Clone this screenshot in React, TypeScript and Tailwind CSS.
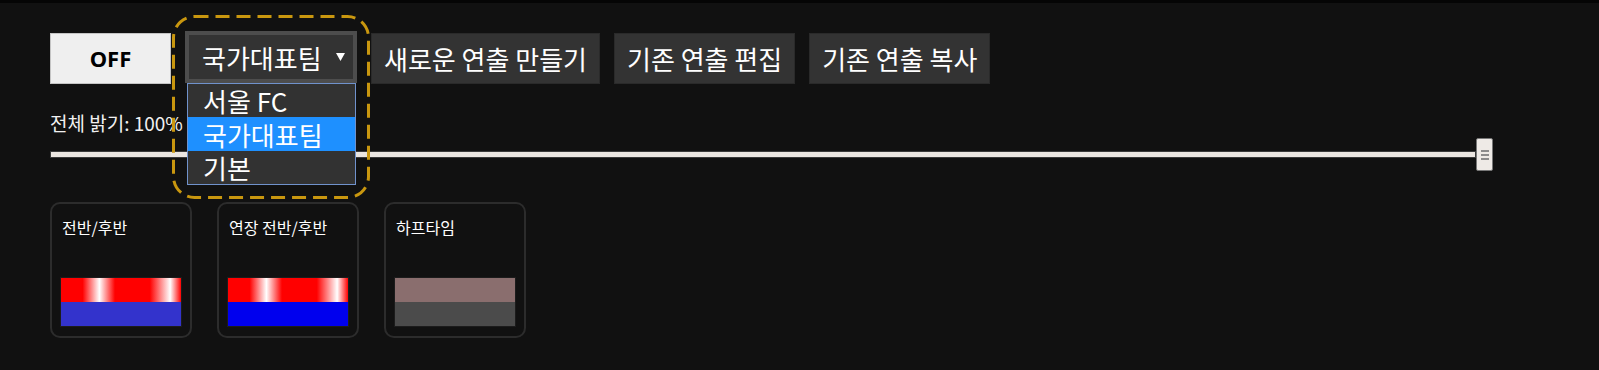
import { useState } from "react";

const font = { fontFamily: '"Noto Sans CJK KR", "Noto Sans", sans-serif' };

const presets = [
  {
    name: "전반/후반",
    top: "bg-[linear-gradient(90deg,#ff0000_0%,#ff0000_18%,#ffffff_32%,#ff0000_45%,#ff0000_74%,#ffffff_91%,#ff0000_100%)]",
    bottom: "bg-[#3333cc]",
  },
  {
    name: "연장 전반/후반",
    top: "bg-[linear-gradient(90deg,#ff0000_0%,#ff0000_18%,#ffffff_32%,#ff0000_45%,#ff0000_74%,#ffffff_91%,#ff0000_100%)]",
    bottom: "bg-[#0000ee]",
  },
  { name: "하프타임", top: "bg-[#8a6e6e]", bottom: "bg-[#4b4b4b]" },
];

const teams = ["서울 FC", "국가대표팀", "기본"];

export default function App() {
  const [team] = useState("국가대표팀");

  return (
    <div className="min-h-[370px] bg-[#111111] border-t-[3px] border-[#050505] text-white" style={font}>
      <div className="px-[50px] pt-[30px]">
        <div className="flex items-start gap-[14px]">
          <button
            className="w-[121px] h-[51px] bg-[#efefef] border border-[#c4c4c4] text-black text-[22px] font-bold"
            style={{ fontFamily: '"Noto Sans", "Open Sans", sans-serif' }}
          >
            OFF
          </button>

          <div className="relative">
            <div className="w-[172px] h-[52px] -mt-[2px] flex items-center justify-between bg-[#333333] border-[4px] border-[#4d4d4d] pl-[13px] pr-[8px] text-[26px]">
              <span>{team}</span>
              <svg width="9" height="8" viewBox="0 0 9 8">
                <polygon points="0,0 9,0 4.5,8" fill="#ffffff" />
              </svg>
            </div>
            <ul className="absolute left-[2px] top-[50px] w-[169px] bg-[#323232] border border-[#7092cc] text-[26px] z-10">
              {teams.map((t) => (
                <li
                  key={t}
                  className={
                    t === team
                      ? "h-[34px] pl-[15px] flex items-center bg-[#1e90ff]"
                      : "h-[33px] pl-[15px] flex items-center"
                  }
                >
                  {t}
                </li>
              ))}
            </ul>
            <svg
              className="absolute -left-[13px] -top-[18px] z-20 pointer-events-none"
              width="198"
              height="184"
              viewBox="0 0 198 184"
            >
              <rect
                x="1.5"
                y="1.5"
                width="195"
                height="181"
                rx="21"
                fill="none"
                stroke="#c9970f"
                strokeWidth="3"
                strokeDasharray="14 7"
              />
            </svg>
          </div>

          <button className="h-[51px] px-[12px] bg-[#333333] border border-[#2a2a2a] text-[26px]">새로운 연출 만들기</button>
          <button className="h-[51px] px-[12px] bg-[#333333] border border-[#2a2a2a] text-[26px]">기존 연출 편집</button>
          <button className="h-[51px] px-[12px] bg-[#333333] border border-[#2a2a2a] text-[26px]">기존 연출 복사</button>
        </div>

        <div className="mt-[26px] h-[25px] leading-[25px] text-[19px] text-[#f0f0f0]">전체 밝기: 100%</div>

        <div className="mt-[3px] w-[1443px] h-[33px] flex items-center">
          <div className="flex-1 h-[7px] bg-[#ebe6e1] border border-[#3a3a3a]" />
          <div className="w-[17px] h-[33px] bg-[#eeeae6] border border-[#777] rounded-[2px] flex flex-col items-center justify-center gap-[2px]">
            <div className="w-[8px] h-[2px] bg-[#8c8c8c]" />
            <div className="w-[8px] h-[2px] bg-[#8c8c8c]" />
            <div className="w-[8px] h-[2px] bg-[#8c8c8c]" />
          </div>
        </div>

        <div className="mt-[31px] flex gap-[25px]">
          {presets.map((p) => (
            <div
              key={p.name}
              className="w-[142px] h-[136px] border-2 border-[#2c2c2c] rounded-[10px] px-[8px] pt-[12px] pb-[9px] flex flex-col justify-between"
            >
              <div className="pl-[2px] text-[16px] leading-[22px]">{p.name}</div>
              <div className="w-full border border-[#1c1c1c]">
                <div className={"h-[24px] " + p.top} />
                <div className={"h-[24px] " + p.bottom} />
              </div>
            </div>
          ))}
        </div>
      </div>
    </div>
  );
}
